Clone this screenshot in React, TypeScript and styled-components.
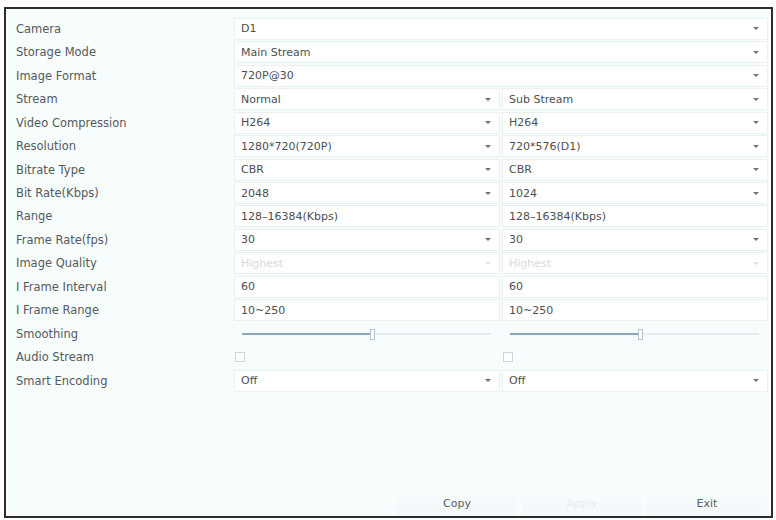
import React from "react";
import styled, { createGlobalStyle } from "styled-components";

type Cell =
    | { kind: "select"; value: string; disabled?: boolean }
    | { kind: "text"; value: string }
    | { kind: "slider"; percent: number }
    | { kind: "check" };

type Row = {
    label: string;
    cells: Cell[];
};

const rows: Row[] = [
    { label: "Camera", cells: [{ kind: "select", value: "D1" }] },
    { label: "Storage Mode", cells: [{ kind: "select", value: "Main Stream" }] },
    { label: "Image Format", cells: [{ kind: "select", value: "720P@30" }] },
    {
        label: "Stream",
        cells: [
            { kind: "select", value: "Normal" },
            { kind: "select", value: "Sub Stream" },
        ],
    },
    {
        label: "Video Compression",
        cells: [
            { kind: "select", value: "H264" },
            { kind: "select", value: "H264" },
        ],
    },
    {
        label: "Resolution",
        cells: [
            { kind: "select", value: "1280*720(720P)" },
            { kind: "select", value: "720*576(D1)" },
        ],
    },
    {
        label: "Bitrate Type",
        cells: [
            { kind: "select", value: "CBR" },
            { kind: "select", value: "CBR" },
        ],
    },
    {
        label: "Bit Rate(Kbps)",
        cells: [
            { kind: "select", value: "2048" },
            { kind: "select", value: "1024" },
        ],
    },
    {
        label: "Range",
        cells: [
            { kind: "text", value: "128–16384(Kbps)" },
            { kind: "text", value: "128–16384(Kbps)" },
        ],
    },
    {
        label: "Frame Rate(fps)",
        cells: [
            { kind: "select", value: "30" },
            { kind: "select", value: "30" },
        ],
    },
    {
        label: "Image Quality",
        cells: [
            { kind: "select", value: "Highest", disabled: true },
            { kind: "select", value: "Highest", disabled: true },
        ],
    },
    {
        label: "I Frame Interval",
        cells: [
            { kind: "text", value: "60" },
            { kind: "text", value: "60" },
        ],
    },
    {
        label: "I Frame Range",
        cells: [
            { kind: "text", value: "10~250" },
            { kind: "text", value: "10~250" },
        ],
    },
    {
        label: "Smoothing",
        cells: [
            { kind: "slider", percent: 52 },
            { kind: "slider", percent: 52 },
        ],
    },
    { label: "Audio Stream", cells: [{ kind: "check" }, { kind: "check" }] },
    {
        label: "Smart Encoding",
        cells: [
            { kind: "select", value: "Off" },
            { kind: "select", value: "Off" },
        ],
    },
];

const GlobalStyle = createGlobalStyle`
    html, body {
        margin: 0;
        padding: 0;
        background: #ffffff;
    }
    body {
        font-family: "DejaVu Sans", "Liberation Sans", sans-serif;
    }
`;

const Page = styled.div`
    width: 776px;
    height: 520px;
    box-sizing: border-box;
    padding: 7px 3px 2px 4px;
`;

const Panel = styled.div`
    height: 100%;
    box-sizing: border-box;
    border: 2px solid #2c2c2c;
    background: #f7fcfd;
    display: flex;
    flex-direction: column;
`;

const Form = styled.div`
    display: flex;
    flex-direction: column;
    padding: 8px 3px 0 10px;
`;

const FormRow = styled.div`
    display: grid;
    grid-template-columns: 218px 1fr;
    align-items: center;
    height: 23.47px;
`;

const Label = styled.span`
    font-size: 11.5px;
    color: #555a5c;
    white-space: nowrap;
`;

const Cells = styled.div`
    display: flex;
    gap: 2px;
    height: 100%;
    align-items: center;
`;

const Box = styled.div<{ $plain?: boolean }>`
    flex: 1;
    min-width: 0;
    height: 22px;
    box-sizing: border-box;
    background: ${(p) => (p.$plain ? "transparent" : "#ffffff")};
    border: 1px solid ${(p) => (p.$plain ? "transparent" : "#ebf0f2")};
    display: flex;
    align-items: center;
    padding: 0 6px;
`;

const Value = styled.span<{ $disabled?: boolean }>`
    flex: 1;
    font-size: 11px;
    color: ${(p) => (p.$disabled ? "#d6dadc" : "#4c4f50")};
    white-space: nowrap;
`;

const Arrow = styled.span<{ $disabled?: boolean }>`
    width: 0;
    height: 0;
    margin-right: 2px;
    border-left: 3px solid transparent;
    border-right: 3px solid transparent;
    border-top: 3px solid ${(p) => (p.$disabled ? "#e0e4e6" : "#727272")};
`;

const Track = styled.div`
    position: relative;
    flex: 1;
    height: 2px;
    background: #e6ecee;
    margin: 0 2px 0 1px;
`;

const Fill = styled.div`
    height: 100%;
    background: #8aa7c2;
`;

const Thumb = styled.div`
    position: absolute;
    top: -4px;
    width: 3px;
    height: 9px;
    margin-left: -1px;
    border: 1px solid #b4c6d6;
    background: #ffffff;
`;

const Check = styled.span`
    width: 8px;
    height: 8px;
    border: 1px solid #cdd3d6;
    background: #ffffff;
    margin-left: -6px;
`;

const Footer = styled.div`
    margin-top: auto;
    display: grid;
    grid-template-columns: repeat(3, 120px);
    gap: 5px;
    justify-content: end;
    padding: 0 4px 1px 0;
`;

const Button = styled.div<{ $disabled?: boolean }>`
    height: 24px;
    display: flex;
    align-items: center;
    justify-content: center;
    font-size: 11px;
    color: ${(p) => (p.$disabled ? "#e6eef0" : "#5a5d5e")};
    background: linear-gradient(#f7fcfd, #f3f9fa);
`;

const CellView = ({ cell }: { cell: Cell }) => {
    switch (cell.kind) {
        case "select":
            return (
                <Box>
                    <Value $disabled={cell.disabled}>{cell.value}</Value>
                    <Arrow $disabled={cell.disabled} />
                </Box>
            );
        case "text":
            return (
                <Box>
                    <Value>{cell.value}</Value>
                </Box>
            );
        case "slider":
            return (
                <Box $plain>
                    <Track>
                        <Fill style={{ width: `${cell.percent}%` }} />
                        <Thumb style={{ left: `${cell.percent}%` }} />
                    </Track>
                </Box>
            );
        case "check":
            return (
                <Box $plain>
                    <Check />
                </Box>
            );
    }
};

export default function App() {
    return (
        <Page>
            <GlobalStyle />
            <Panel>
                <Form>
                    {rows.map((row) => (
                        <FormRow key={row.label}>
                            <Label>{row.label}</Label>
                            <Cells>
                                {row.cells.map((cell, i) => (
                                    <CellView key={i} cell={cell} />
                                ))}
                            </Cells>
                        </FormRow>
                    ))}
                </Form>
                <Footer>
                    <Button>Copy</Button>
                    <Button $disabled>Apply</Button>
                    <Button>Exit</Button>
                </Footer>
            </Panel>
        </Page>
    );
}
